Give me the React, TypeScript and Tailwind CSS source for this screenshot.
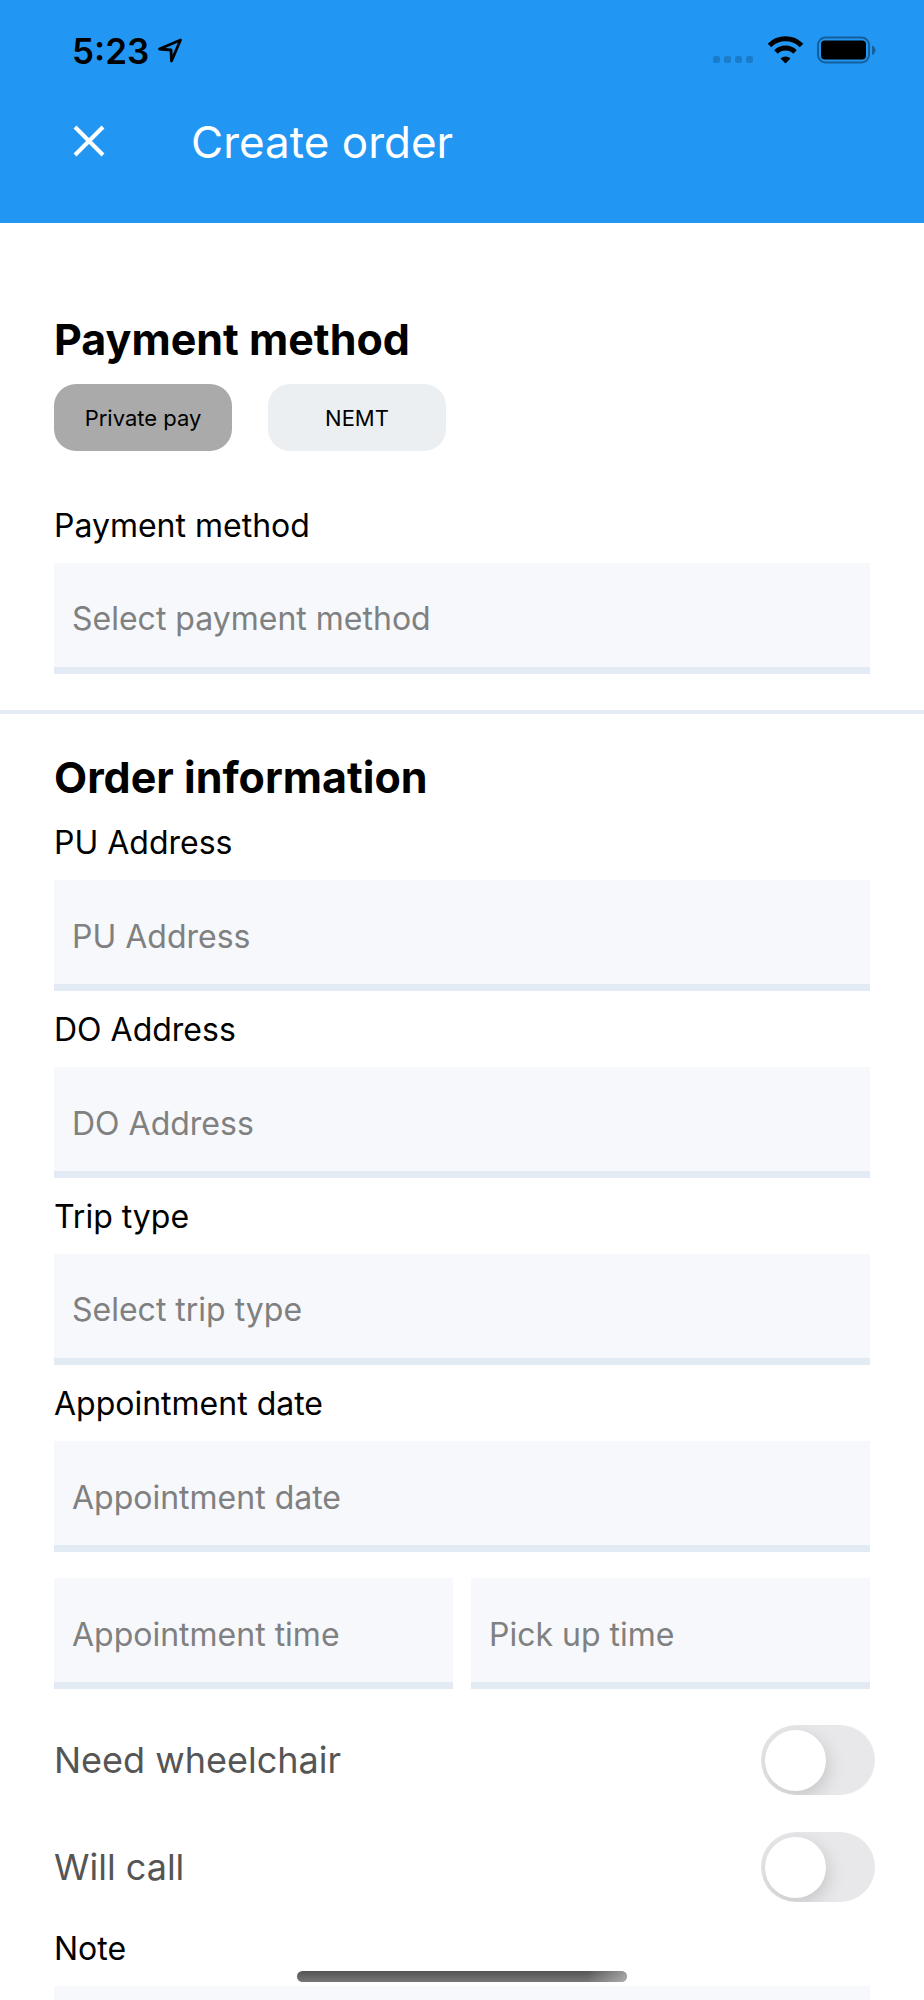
import { useState } from 'react';

function StatusBar() {
  return (
    <div className="flex items-center justify-between pt-8 pr-11 pl-[72px]">
      <div className="flex items-center gap-2">
        <span className="text-[35px] leading-[38px] font-semibold">5:23</span>
        <svg className="h-[26px] w-[26px]" viewBox="0 0 26 26" fill="none" stroke="black" strokeWidth="2.8" strokeLinejoin="round">
          <path d="M23.5 2 L2.5 11 L14 12 L14.5 23 Z" />
        </svg>
      </div>
      <svg className="h-[30px] w-[168px]" viewBox="0 0 168 30">
        <g fill="#1b7cc9">
          <rect x="1" y="20" width="7" height="7" rx="2" />
          <rect x="12" y="20" width="7" height="7" rx="2" />
          <rect x="23" y="20" width="7" height="7" rx="2" />
          <rect x="34" y="20" width="7" height="7" rx="2" />
        </g>
        <g fill="none" stroke="black" strokeWidth="5">
          <path d="M57.5 9.5 a22.5 22.5 0 0 1 32 0" />
          <path d="M64 16 a13.5 13.5 0 0 1 19 0" />
        </g>
        <path d="M68.5 22.5 a7.5 7.5 0 0 1 10 0 L73.5 27.5 Z" fill="black" />
        <rect x="106" y="1.5" width="51" height="25" rx="7.5" fill="none" stroke="#155f9b" strokeWidth="2" />
        <rect x="109" y="4.5" width="45" height="19" rx="4" fill="black" />
        <path d="M160 9.5 q3.5 1.5 3.5 4.8 t-3.5 4.8 z" fill="#155f9b" />
      </svg>
    </div>
  );
}

const fieldClass =
  'block h-[111px] w-full appearance-none rounded-none border-b-[7px] border-[#e2eaf3] bg-[#f6f8fc] px-[18px] pt-2 text-[32px] text-[#808080] outline-none placeholder:text-[#808080] placeholder:opacity-100';

function Label({ id, children }: { id: string; children: string }) {
  return (
    <label htmlFor={id} className="block h-[76px] pt-[19px] text-[32px] leading-[40px]">
      {children}
    </label>
  );
}

function TextField({ id, label }: { id: string; label: string }) {
  return (
    <div>
      <Label id={id}>{label}</Label>
      <input id={id} type="text" placeholder={label} className={fieldClass} />
    </div>
  );
}

function SelectField({ id, label, placeholder }: { id: string; label: string; placeholder: string }) {
  return (
    <div>
      <Label id={id}>{label}</Label>
      <select id={id} className={fieldClass}>
        <option>{placeholder}</option>
      </select>
    </div>
  );
}

function Toggle({ label }: { label: string }) {
  return (
    <label className="-mr-[5px] flex items-center justify-between text-[36px] leading-[44px] text-[#555555]">
      {label}
      <input
        type="checkbox"
        role="switch"
        className="flex h-[70px] w-[114px] appearance-none items-center overflow-hidden rounded-full bg-[#e8e8ea] px-1 before:size-[61px] before:rounded-full before:bg-white before:shadow-[2px_6px_18px_rgba(0,0,0,0.15)] checked:bg-green-500 checked:before:ml-auto"
      />
    </label>
  );
}

export default function App() {
  const [method, setMethod] = useState('Private pay');

  return (
    <div className="relative flex h-screen flex-col overflow-hidden bg-white font-['Inter',sans-serif] text-black">
      <header className="h-[223px] shrink-0 bg-[#2196f3]">
        <StatusBar />
        <div className="mt-10 flex h-16 items-center gap-[85px] pl-[72px] text-white">
          <button type="button" aria-label="Close">
            <svg className="h-[34px] w-[34px]" viewBox="0 0 34 34" stroke="white" strokeWidth="4">
              <path d="M3 2 L31 30 M31 2 L3 30" />
            </svg>
          </button>
          <h1 className="text-[44px] leading-[56px]">Create order</h1>
        </div>
      </header>

      <main className="flex-1 overflow-y-auto [scrollbar-width:none]">
        <section className="px-[54px] pt-[89px] pb-9">
          <h2 className="text-[43px] leading-[54px] font-bold">Payment method</h2>
          <div className="mt-[18px] mb-9 flex gap-9">
            {['Private pay', 'NEMT'].map((name) => (
              <button
                key={name}
                type="button"
                onClick={() => setMethod(name)}
                className={`h-[67px] w-[178px] rounded-[22px] pt-px text-[22px] ${method === name ? 'bg-[#aaaaaa]' : 'bg-[#ebeff2]'}`}
              >
                {name}
              </button>
            ))}
          </div>
          <SelectField id="payment" label="Payment method" placeholder="Select payment method" />
        </section>

        <section className="border-t-4 border-[#e2eaf3] px-[54px] pt-9">
          <h2 className="text-[43px] leading-[54px] font-bold">Order information</h2>
          <TextField id="pu" label="PU Address" />
          <TextField id="do" label="DO Address" />
          <SelectField id="trip" label="Trip type" placeholder="Select trip type" />
          <TextField id="date" label="Appointment date" />
          <div className="mt-[26px] mb-9 grid grid-cols-2 gap-[18px]">
            <input type="text" aria-label="Appointment time" placeholder="Appointment time" className={fieldClass} />
            <input type="text" aria-label="Pick up time" placeholder="Pick up time" className={fieldClass} />
          </div>
          <div className="mb-2 flex flex-col gap-[37px]">
            <Toggle label="Need wheelchair" />
            <Toggle label="Will call" />
          </div>
          <Label id="note">Note</Label>
          <input id="note" type="text" className={fieldClass} />
        </section>
      </main>

      <div className="absolute bottom-[18px] left-1/2 h-[11px] w-[330px] -translate-x-1/2 overflow-hidden rounded-full bg-linear-to-b from-[#555555] to-[#777777]">
        <div className="ml-auto h-full w-10 bg-linear-to-r from-transparent to-white/40" />
      </div>
    </div>
  );
}
